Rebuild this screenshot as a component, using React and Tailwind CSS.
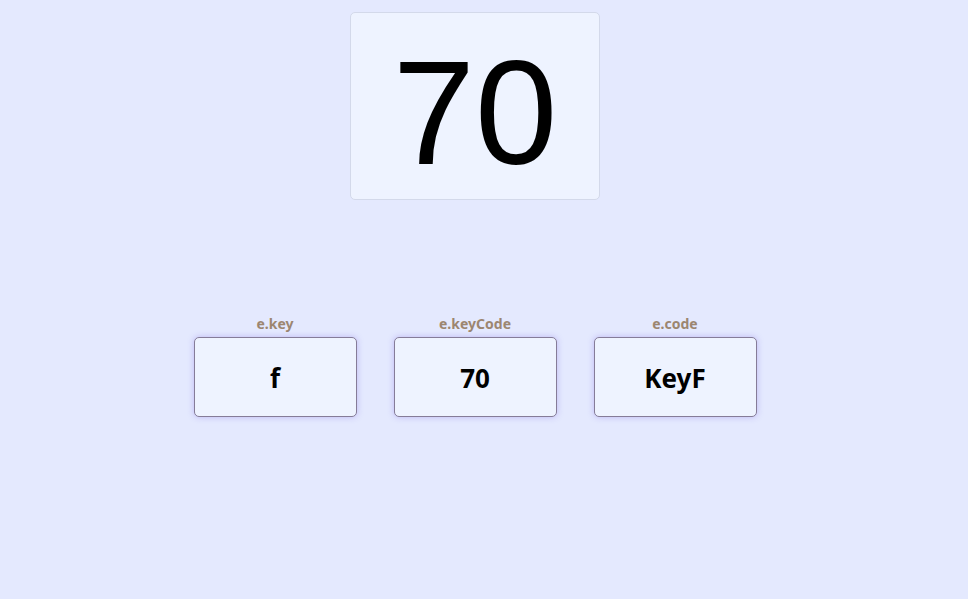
export default function App() {
  const keys = [
    { label: "e.key", value: "f" },
    { label: "e.keyCode", value: "70" },
    { label: "e.code", value: "KeyF" },
  ];
  return (
    <div className="min-h-[599px] w-full bg-[#e4e9fe]">
      <div className="w-[950px] flex flex-col items-center pt-[12px]">
        <div className="w-[250px] h-[188px] bg-[#eef3ff] border border-[#d3d9ea] rounded-[5px] flex items-center justify-center">
          <span className="text-[148px] leading-none text-black font-['Liberation_Sans',Arial,sans-serif] mt-[14px]">70</span>
        </div>
        <div className="flex gap-[37px] mt-[114px]">
          {keys.map((k) => (
            <div key={k.label} className="flex flex-col items-center">
              <div className="text-[14px] leading-[20px] font-bold text-[#9c8670] font-['Noto_Sans',sans-serif] mb-[3px]">{k.label}</div>
              <div className="w-[163px] h-[80px] bg-[#eef3ff] border border-[#857c98] rounded-[5px] shadow-[0_0_6px_rgba(140,120,230,0.45)] flex items-center justify-center">
                <span className="text-[26px] font-bold text-black font-['Noto_Sans',sans-serif] mt-[2px]">{k.value}</span>
              </div>
            </div>
          ))}
        </div>
      </div>
    </div>
  );
}
